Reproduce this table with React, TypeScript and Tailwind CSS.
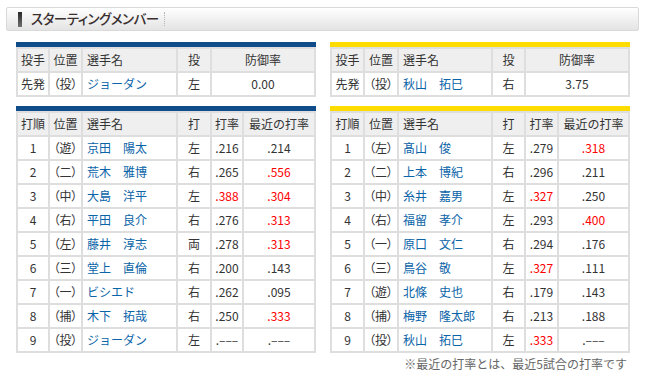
import React from "react";

type Cell = { t: string; red?: boolean };
type Row = [string, string, string, string, Cell, Cell];

const NA = ".–––";

const leftRows: Row[] = [
  ["1", "（遊）", "京田　陽太", "左", { t: ".216" }, { t: ".214" }],
  ["2", "（二）", "荒木　雅博", "右", { t: ".265" }, { t: ".556", red: true }],
  ["3", "（中）", "大島　洋平", "左", { t: ".388", red: true }, { t: ".304", red: true }],
  ["4", "（右）", "平田　良介", "右", { t: ".276" }, { t: ".313", red: true }],
  ["5", "（左）", "藤井　淳志", "両", { t: ".278" }, { t: ".313", red: true }],
  ["6", "（三）", "堂上　直倫", "右", { t: ".200" }, { t: ".143" }],
  ["7", "（一）", "ビシエド", "右", { t: ".262" }, { t: ".095" }],
  ["8", "（捕）", "木下　拓哉", "右", { t: ".250" }, { t: ".333", red: true }],
  ["9", "（投）", "ジョーダン", "左", { t: NA }, { t: NA }],
];

const rightRows: Row[] = [
  ["1", "（左）", "髙山　俊", "左", { t: ".279" }, { t: ".318", red: true }],
  ["2", "（二）", "上本　博紀", "右", { t: ".296" }, { t: ".211" }],
  ["3", "（中）", "糸井　嘉男", "左", { t: ".327", red: true }, { t: ".250" }],
  ["4", "（右）", "福留　孝介", "左", { t: ".293" }, { t: ".400", red: true }],
  ["5", "（一）", "原口　文仁", "右", { t: ".294" }, { t: ".176" }],
  ["6", "（三）", "鳥谷　敬", "左", { t: ".327", red: true }, { t: ".111" }],
  ["7", "（遊）", "北條　史也", "右", { t: ".179" }, { t: ".143" }],
  ["8", "（捕）", "梅野　隆太郎", "右", { t: ".213" }, { t: ".188" }],
  ["9", "（投）", "秋山　拓巳", "左", { t: ".333", red: true }, { t: NA }],
];

const hd = "h-[22px] bg-[#efefef] flex items-center justify-center whitespace-nowrap";
const hdL = "h-[22px] bg-[#efefef] flex items-center justify-start pl-[4px] whitespace-nowrap";
const td = "h-[22px] bg-white flex items-center justify-center whitespace-nowrap";
const tdPos = "h-[22px] bg-white flex items-center justify-center whitespace-nowrap [font-feature-settings:'palt']";
const tdName = "h-[22px] bg-white flex items-center justify-start pl-[4px] whitespace-nowrap text-[#0a64a8]";

function PitcherTable({ side, name, hand, era }: { side: "l" | "r"; name: string; hand: string; era: string }) {
  return (
    <div className="w-[300px]">
      <div className={side === "l" ? "h-[5px] bg-[#0f4c8a]" : "h-[5px] bg-[#ffdc00]"} />
      <div
        className={
          side === "l"
            ? "grid grid-cols-[30px_31px_93px_32px_102px] gap-[2px] p-[2px] bg-[#dedede]"
            : "grid grid-cols-[31px_32px_92px_31px_102px] gap-[2px] p-[2px] bg-[#dedede]"
        }
      >
        <div className={hd}>投手</div>
        <div className={hd}>位置</div>
        <div className={hdL}>選手名</div>
        <div className={hd}>投</div>
        <div className={hd}>防御率</div>
        <div className={td}>先発</div>
        <div className={tdPos}>（投）</div>
        <div className={tdName}>{name}</div>
        <div className={td}>{hand}</div>
        <div className={td}>{era}</div>
      </div>
    </div>
  );
}

function BatterTable({ side, rows }: { side: "l" | "r"; rows: Row[] }) {
  return (
    <div className="w-[300px]">
      <div className={side === "l" ? "h-[5px] bg-[#0f4c8a]" : "h-[5px] bg-[#ffdc00]"} />
      <div
        className={
          side === "l"
            ? "grid grid-cols-[30px_31px_93px_32px_30px_70px] gap-[2px] p-[2px] bg-[#dedede]"
            : "grid grid-cols-[31px_32px_92px_31px_31px_69px] gap-[2px] p-[2px] bg-[#dedede]"
        }
      >
        <div className={hd}>打順</div>
        <div className={hd}>位置</div>
        <div className={hdL}>選手名</div>
        <div className={hd}>打</div>
        <div className={hd}>打率</div>
        <div className={hd}>最近の打率</div>
        {rows.map((r) => (
          <React.Fragment key={r[0]}>
            <div className={td}>{r[0]}</div>
            <div className={tdPos}>{r[1]}</div>
            <div className={tdName}>{r[2]}</div>
            <div className={td}>{r[3]}</div>
            <div className={td}>
              <span className={r[4].red ? "text-[#ff0000]" : ""}>{r[4].t}</span>
            </div>
            <div className={td}>
              <span className={r[5].red ? "text-[#ff0000]" : ""}>{r[5].t}</span>
            </div>
          </React.Fragment>
        ))}
      </div>
    </div>
  );
}

export default function App() {
  return (
    <div className="w-[645px] h-[381px] bg-white px-[6px] pt-[7px] font-['Noto_Sans_CJK_JP',sans-serif] text-[12px] leading-none text-[#333]">
      <div className="h-[24px] flex items-center border border-[#d9d9d9] rounded-[2px] bg-gradient-to-b from-white via-[#f1f1f1] to-[#e4e4e4]">
        <div className="ml-[11px] w-[4px] h-[15px] bg-gradient-to-b from-[#2a2a2a] to-[#707070]" />
        <span className="ml-[9px] text-[13.5px] font-medium text-[#3a3030] [font-feature-settings:'palt'] tracking-[-0.5px]">
          スターティングメンバー
        </span>
        <div className="ml-[5px] h-[14px] border-l border-dotted border-[#b5b5b5]" />
      </div>
      <div className="ml-[10px] mt-[11px] w-[614px]">
        <div className="flex gap-[14px]">
          <PitcherTable side="l" name="ジョーダン" hand="左" era="0.00" />
          <PitcherTable side="r" name="秋山　拓巳" hand="右" era="3.75" />
        </div>
        <div className="flex gap-[14px] mt-[9px]">
          <BatterTable side="l" rows={leftRows} />
          <BatterTable side="r" rows={rightRows} />
        </div>
        <div className="mt-[3px] pr-[3px] text-right text-[#666] leading-[16px]">
          ※最近の打率とは、最近5試合の打率です
        </div>
      </div>
    </div>
  );
}
